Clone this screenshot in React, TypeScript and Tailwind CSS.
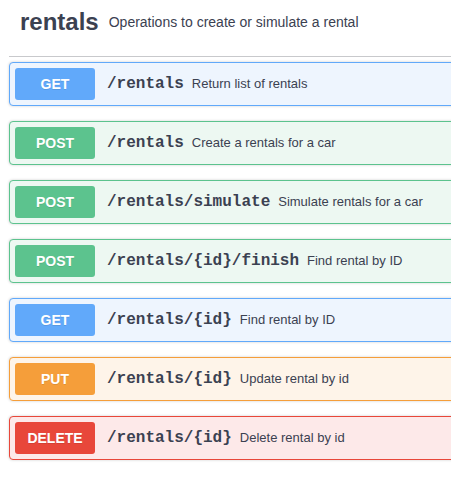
import React from "react";

type Op = {
  method: "GET" | "POST" | "PUT" | "DELETE";
  path: string;
  summary: string;
};

const ops: Op[] = [
  { method: "GET", path: "/rentals", summary: "Return list of rentals" },
  { method: "POST", path: "/rentals", summary: "Create a rentals for a car" },
  { method: "POST", path: "/rentals/simulate", summary: "Simulate rentals for a car" },
  { method: "POST", path: "/rentals/{id}/finish", summary: "Find rental by ID" },
  { method: "GET", path: "/rentals/{id}", summary: "Find rental by ID" },
  { method: "PUT", path: "/rentals/{id}", summary: "Update rental by id" },
  { method: "DELETE", path: "/rentals/{id}", summary: "Delete rental by id" },
];

const styles = {
  GET: { block: "bg-[#eef5fe] border-[#61a9fa]", badge: "bg-[#61a9fa]" },
  POST: { block: "bg-[#edf8f2] border-[#5cc38e]", badge: "bg-[#5cc38e]" },
  PUT: { block: "bg-[#fef4e9] border-[#f59e3a]", badge: "bg-[#f59e3a]" },
  DELETE: { block: "bg-[#fde9e9] border-[#e8473a]", badge: "bg-[#e8473a]" },
};

function OpBlock({ op }: { op: Op }) {
  const s = styles[op.method];
  return (
    <div
      className={`flex items-center border rounded-[4px] p-[5px] mb-[15px] shadow-[0_0_3px_rgba(0,0,0,0.19)] ${s.block}`}
    >
      <span
        className={`w-[80px] h-[32px] flex items-center justify-center rounded-[3px] text-white text-[14px] font-bold [text-shadow:0_1px_0_rgba(0,0,0,0.1)] ${s.badge}`}
      >
        {op.method}
      </span>
      <span className="pl-[12px] pr-[8px] text-[16px] font-bold text-[#3b4151] font-['Liberation_Mono',monospace]">
        {op.path}
      </span>
      <span className="text-[13px] text-[#3b4151]">{op.summary}</span>
    </div>
  );
}

export default function App() {
  return (
    <div className="w-[451px] h-[490px] overflow-hidden bg-white font-['Liberation_Sans',Arial,sans-serif]">
      <div className="w-[490px] pl-[9px]">
        {/* tag header */}
        <div className="flex items-center pl-[11px] pt-[6px] pb-[18px] border-b border-[#c8c9cc] mb-[5px] text-[#3b4151]">
          <span className="text-[24px] leading-[32px] font-bold">rentals</span>
          <span className="pl-[10px] text-[14px]">Operations to create or simulate a rental</span>
        </div>
        {ops.map((op, i) => (
          <OpBlock key={i} op={op} />
        ))}
      </div>
    </div>
  );
}
